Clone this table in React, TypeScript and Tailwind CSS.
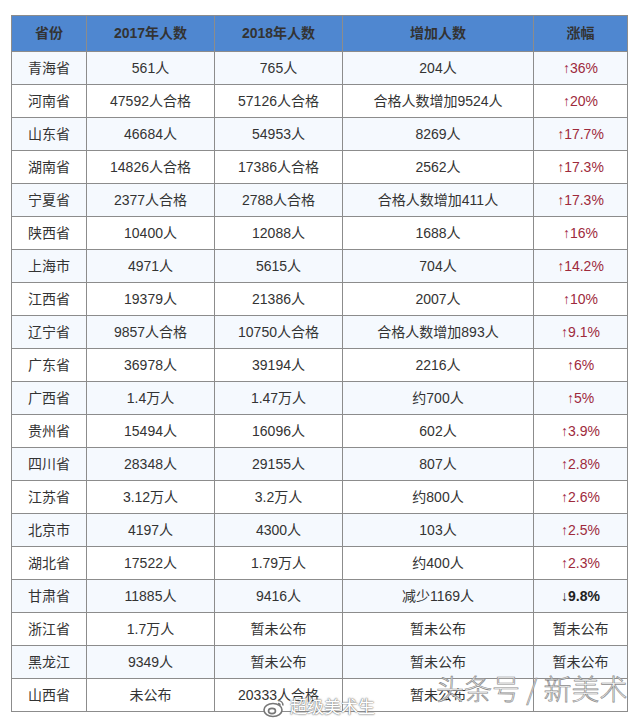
import React from 'react'

type Row = [string, string, string, string, string]

const rows: Row[] = [
  ['青海省', '561人', '765人', '204人', '36%'],
  ['河南省', '47592人合格', '57126人合格', '合格人数增加9524人', '20%'],
  ['山东省', '46684人', '54953人', '8269人', '17.7%'],
  ['湖南省', '14826人合格', '17386人合格', '2562人', '17.3%'],
  ['宁夏省', '2377人合格', '2788人合格', '合格人数增加411人', '17.3%'],
  ['陕西省', '10400人', '12088人', '1688人', '16%'],
  ['上海市', '4971人', '5615人', '704人', '14.2%'],
  ['江西省', '19379人', '21386人', '2007人', '10%'],
  ['辽宁省', '9857人合格', '10750人合格', '合格人数增加893人', '9.1%'],
  ['广东省', '36978人', '39194人', '2216人', '6%'],
  ['广西省', '1.4万人', '1.47万人', '约700人', '5%'],
  ['贵州省', '15494人', '16096人', '602人', '3.9%'],
  ['四川省', '28348人', '29155人', '807人', '2.8%'],
  ['江苏省', '3.12万人', '3.2万人', '约800人', '2.6%'],
  ['北京市', '4197人', '4300人', '103人', '2.5%'],
  ['湖北省', '17522人', '1.79万人', '约400人', '2.3%'],
  ['甘肃省', '11885人', '9416人', '减少1169人', 'down'],
  ['浙江省', '1.7万人', '暂未公布', '暂未公布', '暂未公布'],
  ['黑龙江', '9349人', '暂未公布', '暂未公布', '暂未公布'],
  ['山西省', '未公布', '20333人合格', '暂未公布', ''],
]

const cell = 'border border-[#8c8c8c] text-center align-middle p-0 whitespace-nowrap'

function Change({ value }: { value: string }) {
  if (value === 'down') {
    return (
      <span className="text-[#222]">
        <span className="font-normal">↓</span>
        <span className="font-bold">9.8%</span>
      </span>
    )
  }
  if (value === '暂未公布' || value === '') return <span>{value}</span>
  return <span className="text-[#9e2a3c]">↑{value}</span>
}

export default function App() {
  return (
    <div
      className="relative w-[640px] h-[721px] bg-white overflow-hidden pt-[15px] pl-[11px]"
      style={{ fontFamily: '"Liberation Sans", Arial, "Noto Sans CJK SC", sans-serif' }}
    >
      <table className="border-collapse table-fixed w-[616px] text-[14px] text-[#333]">
        <colgroup>
          <col className="w-[75px]" />
          <col className="w-[128px]" />
          <col className="w-[128px]" />
          <col className="w-[191px]" />
          <col className="w-[94px]" />
        </colgroup>
        <thead>
          <tr className="h-[36px] bg-[#4f87d0]">
            {['省份', '2017年人数', '2018年人数', '增加人数', '涨幅'].map((h) => (
              <th key={h} className={`${cell} font-bold text-[#333]`}>{h}</th>
            ))}
          </tr>
        </thead>
        <tbody>
          {rows.map((r, i) => (
            <tr key={r[0]} className={`h-[33px] ${i % 2 === 0 ? 'bg-[#f5f9fe]' : 'bg-white'}`}>
              <td className={cell}>{r[0]}</td>
              <td className={cell}>{r[1]}</td>
              <td className={cell}>{r[2]}</td>
              <td className={cell}>{r[3]}</td>
              <td className={cell}><Change value={r[4]} /></td>
            </tr>
          ))}
        </tbody>
      </table>

      {/* weibo watermark */}
      <div className="absolute left-[262px] top-[695px] flex items-center gap-1 text-white text-[17px] whitespace-nowrap"
        style={{ textShadow: '0 0 2px #777, 0 0 1px #555' }}>
        <svg width="24" height="20" viewBox="0 0 24 20" fill="none" stroke="#777" strokeWidth="1.6">
          <ellipse cx="11" cy="12" rx="9" ry="6.5" fill="#fff" />
          <ellipse cx="10" cy="13" rx="3.5" ry="2.6" />
          <path d="M16 2.5c2.8 0 5 2.2 5 5" />
          <path d="M16 5.5c1.2 0 2 0.8 2 2" />
        </svg>
        <span>超级美术生</span>
      </div>

      {/* toutiao watermark */}
      <div className="absolute left-[436px] top-[674px] text-[28px] leading-none font-light text-[#fdfdfd] whitespace-nowrap"
        style={{ fontFamily: '"Noto Sans CJK SC", sans-serif', WebkitTextStroke: '0.7px #8a8a8a' }}>
        头条号 / 新美术
      </div>
    </div>
  )
}
